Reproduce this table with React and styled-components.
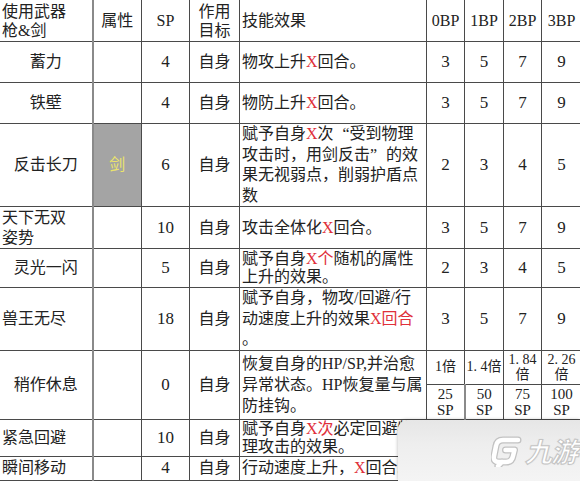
import React from "react";
import styled, { createGlobalStyle } from "styled-components";

const GlobalStyle = createGlobalStyle`
  html, body {
    margin: 0;
    padding: 0;
    background: #ffffff;
    overflow: hidden;
  }
  body {
    font-family: "Liberation Serif", "Noto Sans CJK SC", serif;
    color: #222;
  }
`;

const Page = styled.div`
  position: relative;
  width: 580px;
  height: 481px;
  overflow: hidden;
  background: #fff;
`;

const Sheet = styled.table`
  border-collapse: collapse;
  table-layout: fixed;
  width: 582px;
  margin: -1px 0 0 -1px;
  font-size: 16px;
  line-height: 20px;
`;

const Row = styled.tr`
  height: ${(p) => p.$h}px;
`;

const Cell = styled.td`
  border: 1px solid #4a4a4a;
  padding: 0 ${(p) => (p.$align === "left" ? "2px" : "1px")};
  text-align: ${(p) => p.$align || "center"};
  vertical-align: middle;
  font-size: ${(p) => p.$size || 16}px;
  line-height: ${(p) => p.$lh || 20}px;
  background: ${(p) => p.$bg || "transparent"};
  color: ${(p) => p.$color || "#222"};
  white-space: nowrap;
  overflow: hidden;
  &:first-child {
    border-right: 2px solid #8a8a8a;
  }
`;

const Line = styled.span`
  display: block;
`;

const Hot = styled.span`
  color: #e0303a;
`;

/* full-width CJK quote marks, like the SimSun ones in the sheet */
const Quote = styled.span`
  display: inline-block;
  width: 16px;
  text-align: ${(p) => (p.$open ? "right" : "left")};
`;

const Watermark = styled.div`
  position: absolute;
  left: 398px;
  top: 420px;
  right: 0;
  bottom: 0;
  border-top-left-radius: 9px;
  background: linear-gradient(180deg, #e6e6e6 0%, #eeeeee 40%, #f4f4f4 100%);
  box-shadow: -1px -1px 3px rgba(0, 0, 0, 0.18);
  display: flex;
  align-items: center;
  justify-content: flex-end;
  gap: 2px;
  padding-right: 3px;
`;

const Brand = styled.span`
  font-family: "Noto Sans CJK SC", sans-serif;
  font-size: 27px;
  font-weight: 700;
  font-style: italic;
  color: #ffffff;
  letter-spacing: -1px;
  -webkit-text-stroke: 1px #c4c4c4;
  text-shadow: 0 0 2px rgba(0, 0, 0, 0.12);
`;

const widths = [93, 49, 48, 50, 187, 38, 39, 38, 40];

const rows = [
  {
    name: "蓄力",
    nameAlign: "center",
    sp: "4",
    h: 41,
    desc: [<>物攻上升<Hot>X</Hot>回合。</>],
    bp: [3, 5, 7, 9],
  },
  {
    name: "铁壁",
    nameAlign: "center",
    sp: "4",
    h: 41,
    desc: [<>物防上升<Hot>X</Hot>回合。</>],
    bp: [3, 5, 7, 9],
  },
  {
    name: "反击长刀",
    nameAlign: "center",
    sp: "6",
    h: 82,
    attr: "剑",
    lh: 20.5,
    desc: [
      <>赋予自身<Hot>X</Hot>次<Quote $open>“</Quote>受到物理</>,
      <>攻击时，用剑反击<Quote>”</Quote>的效</>,
      <>果无视弱点，削弱护盾点</>,
      <>数</>,
    ],
    bp: [2, 3, 4, 5],
  },
  {
    name: ["天下无双", "姿势"],
    nameAlign: "left",
    sp: "10",
    h: 42,
    desc: [<>攻击全体化<Hot>X</Hot>回合。</>],
    bp: [3, 5, 7, 9],
  },
  {
    name: "灵光一闪",
    nameAlign: "center",
    sp: "5",
    h: 39,
    lh: 18,
    desc: [<>赋予自身<Hot>X个</Hot>随机的属性</>, <>上升的效果。</>],
    bp: [2, 3, 4, 5],
  },
  {
    name: "兽王无尽",
    nameAlign: "left",
    sp: "18",
    h: 62,
    lh: 20.5,
    desc: [
      <>赋予自身，物攻/回避/行</>,
      <>动速度上升的效果<Hot>X回合</Hot></>,
      <>。</>,
    ],
    bp: [3, 5, 7, 9],
  },
];

// the last two rows run under the watermark, their BP cells can't be read
const tail = [
  {
    name: "紧急回避",
    nameAlign: "left",
    sp: "10",
    h: 37,
    lh: 17.5,
    desc: [<>赋予自身<Hot>X次</Hot>必定回避物</>, <>理攻击的效果。</>],
    bp: ["", "", "", ""],
  },
  {
    name: "瞬间移动",
    nameAlign: "left",
    sp: "4",
    h: 24,
    desc: [<>行动速度上升，<Hot>X</Hot>回合。</>],
    bp: ["", "", "", ""],
  },
];

function Lines({ items }) {
  return items.map((t, i) => <Line key={i}>{t}</Line>);
}

function SkillRow({ row }) {
  const name = Array.isArray(row.name) ? row.name : [row.name];
  return (
    <Row $h={row.h}>
      <Cell $align={row.nameAlign}>
        <Lines items={name} />
      </Cell>
      {row.attr ? (
        <Cell $bg="#a4a4a4" $color="#ece46a">
          {row.attr}
        </Cell>
      ) : (
        <Cell />
      )}
      <Cell $size={17}>{row.sp}</Cell>
      <Cell>自身</Cell>
      <Cell $align="left" $lh={row.lh}>
        <Lines items={row.desc} />
      </Cell>
      {row.bp.map((v, i) => (
        <Cell key={i} $size={17}>
          {v}
        </Cell>
      ))}
    </Row>
  );
}

function Logo() {
  const d =
    "M27 5 H12 Q6 5 5 11 L3 21 Q2 27 8 27 H15 Q21 27 22 21 L23.5 15 H14.5 M11 27 L7 31";
  return (
    <svg width="32" height="32" viewBox="0 0 32 32">
      <g fill="none" strokeLinecap="round" strokeLinejoin="round">
        <path d={d} stroke="#c2c2c2" strokeWidth="7" />
        <path d={d} stroke="#ffffff" strokeWidth="4.5" />
      </g>
    </svg>
  );
}

export default function App() {
  return (
    <Page>
      <GlobalStyle />
      <Sheet>
        <colgroup>
          {widths.map((w, i) => (
            <col key={i} style={{ width: w }} />
          ))}
        </colgroup>
        <tbody>
          <Row $h={42}>
            <Cell $align="left" $lh={19}>
              <Line>使用武器</Line>
              <Line>枪&amp;剑</Line>
            </Cell>
            <Cell>属性</Cell>
            <Cell>SP</Cell>
            <Cell $lh={19}>
              <Line>作用</Line>
              <Line>目标</Line>
            </Cell>
            <Cell $align="left">技能效果</Cell>
            <Cell>0BP</Cell>
            <Cell>1BP</Cell>
            <Cell>2BP</Cell>
            <Cell>3BP</Cell>
          </Row>
          {rows.map((r, i) => (
            <SkillRow key={i} row={r} />
          ))}
          <Row $h={34}>
            <Cell rowSpan={2}>稍作休息</Cell>
            <Cell rowSpan={2} />
            <Cell rowSpan={2} $size={17}>
              0
            </Cell>
            <Cell rowSpan={2}>自身</Cell>
            <Cell rowSpan={2} $align="left" $lh={21}>
              <Line>恢复自身的HP/SP,并治愈</Line>
              <Line>异常状态。HP恢复量与属</Line>
              <Line>防挂钩。</Line>
            </Cell>
            <Cell $size={14}>1倍</Cell>
            <Cell $size={14}>1.&nbsp;4倍</Cell>
            <Cell $size={14} $lh={15}>
              <Line>1.&nbsp;84</Line>
              <Line>倍</Line>
            </Cell>
            <Cell $size={14} $lh={15}>
              <Line>2.&nbsp;26</Line>
              <Line>倍</Line>
            </Cell>
          </Row>
          <Row $h={35}>
            {["25", "50", "75", "100"].map((v) => (
              <Cell key={v} $size={15} $lh={16}>
                <Line>{v}</Line>
                <Line>SP</Line>
              </Cell>
            ))}
          </Row>
          {tail.map((r, i) => (
            <SkillRow key={i} row={r} />
          ))}
        </tbody>
      </Sheet>
      <Watermark>
        <Logo />
        <Brand>九游</Brand>
      </Watermark>
    </Page>
  );
}
